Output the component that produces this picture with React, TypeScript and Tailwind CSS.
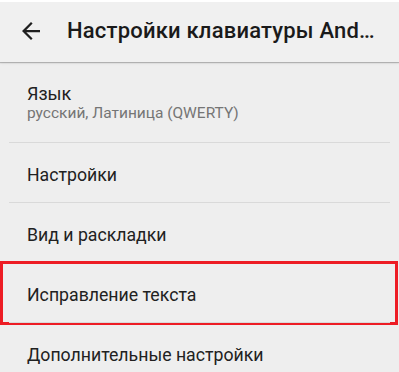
const items = ["Настройки", "Вид и раскладки", "Исправление текста", "Дополнительные настройки"];

function ArrowBack() {
  return (
    <svg width="18" height="18" viewBox="4 4 16 16" className="shrink-0">
      <path
        d="M20 11H7.83l5.59-5.59L12 4l-8 8 8 8 1.41-1.41L7.83 13H20v-2z"
        fill="#1f1f1f"
      />
    </svg>
  );
}

export default function App() {
  return (
    <div className="relative h-[372px] w-[399px] overflow-hidden bg-[#eeeeee] font-['Roboto','Liberation_Sans',sans-serif] text-[#212121]">
      <header className="relative z-10 flex h-[62px] items-center border-t-2 border-white bg-[#f0f0f0] pb-[3px] pl-[22px] shadow-[0_1px_1px_rgba(0,0,0,0.22),0_1px_3px_rgba(0,0,0,0.08)]">
        <ArrowBack />
        <h1 className="ml-[27px] text-[22px] leading-[26px] font-medium tracking-[0.2px] whitespace-nowrap text-[#1a1a1a]">
          Настройки клавиатуры And…
        </h1>
      </header>

      <div className="flex h-[80px] flex-col justify-center px-[27px] pt-[2px]">
        <div className="text-[18px] leading-[20px]">Язык</div>
        <div className="text-[15.5px] leading-[19px] text-[#757575]">русский, Латиница (QWERTY)</div>
      </div>

      {items.map((label, i) => (
        <div key={label} className="relative h-[60px]">
          <div className="mx-[9px] h-px bg-[#d9d9d9]" />
          <div className="flex h-[59px] items-center px-[27px] pt-[4px] text-[17.7px] leading-[20px]">
            {label}
          </div>
          {i === 2 && (
            <div className="absolute top-[-1px] left-0 h-[64px] w-[398px] border-[3px] border-[#ed1c24]" />
          )}
        </div>
      ))}
    </div>
  );
}
